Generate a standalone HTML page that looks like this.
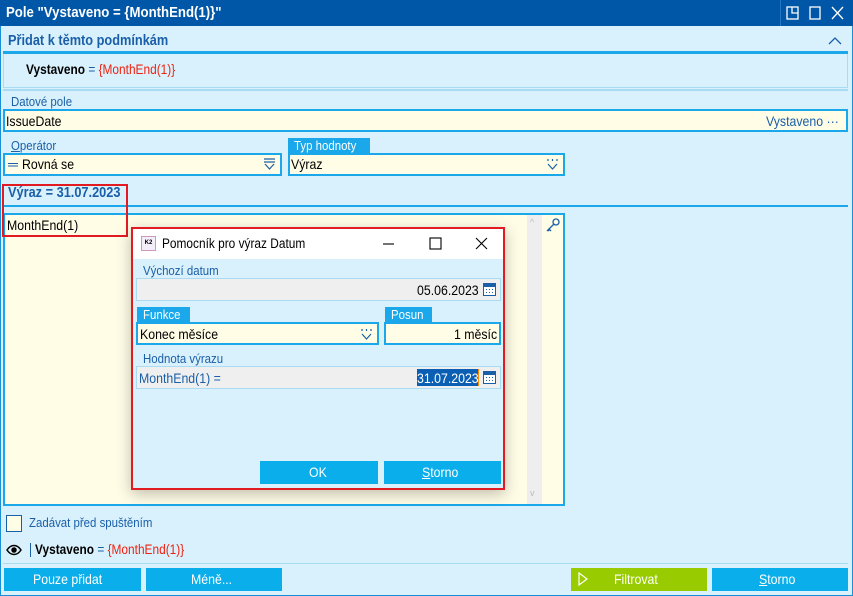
<!DOCTYPE html>
<html><head><meta charset="utf-8"><style>
*{margin:0;padding:0;box-sizing:border-box}
body{width:853px;height:596px;background:#fff;font-family:"Liberation Sans",sans-serif;font-size:12px;position:relative;overflow:hidden;color:#000}
.a{position:absolute}
.n{display:inline-block;transform:scaleX(.88);transform-origin:left center;white-space:nowrap}
.inp{position:absolute;background:#fffde6;border:2px solid #1aa8ea}
.lbl{position:absolute;color:#1a5fa8;font-size:13px}
.tab{position:absolute;background:#1aa8ea;color:#fff;font-size:13px;padding-left:6px;line-height:15px}
.btn{position:absolute;background:#0aaeea;color:#fff;text-align:center;line-height:23px;font-size:14px}
</style></head><body>
<div class="a" style="left:0;top:0;width:853px;height:596px;background:#d9f1fc;border:1px solid #1a8fd8"></div>
<div class="a" style="left:0;top:0;width:853px;height:26px;background:#0057a8"></div>
<div class="a" style="left:6px;top:4px;color:#fff;font-weight:bold;font-size:15px"><span class="n">Pole "Vystaveno = {MonthEnd(1)}"</span></div>
<div class="a" style="left:780px;top:0;width:1px;height:26px;background:#2a75c0"></div>
<svg class="a" style="left:786px;top:6px" width="62" height="15" fill="none" stroke="#fff" stroke-width="1.3"><rect x="1" y="1" width="11" height="12"/><path d="M6 1v6h6"/><rect x="24" y="1" width="10" height="12"/><path d="M46 1l11 12M57 1L46 13"/></svg>
<div class="a" style="left:8px;top:33px;color:#1a5fa8;font-weight:bold;font-size:14.5px"><span class="n">Přidat k těmto podmínkám</span></div>
<svg class="a" style="left:828px;top:36px" width="14" height="9" fill="none" stroke="#1a5fa8" stroke-width="1.3"><path d="M1 8l6-6 6 6"/></svg>
<div class="a" style="left:3px;top:51px;width:845px;height:3px;background:#1aa8ea"></div>
<div class="a" style="left:3px;top:54px;width:845px;height:34px;border:1px solid #a9dcf2;border-top:none"></div>
<div class="a" style="left:26px;top:62px;font-size:13.5px"><span class="n"><b>Vystaveno</b> <span style="color:#1a5fa8">=</span> <span style="color:#e21">{MonthEnd(1)}</span></span></div>
<div class="a" style="left:3px;top:89px;width:845px;height:2px;background:#a9dcf2"></div>
<div class="lbl" style="left:11px;top:94px"><span class="n">Datové pole</span></div>
<div class="inp" style="left:3px;top:109px;width:845px;height:23px"></div>
<div class="a" style="left:6px;top:113px;font-size:14px"><span class="n">IssueDate</span></div>
<div class="a" style="left:766px;top:113px;font-size:14px;color:#1a5fa8"><span class="n">Vystaveno ···</span></div>
<div class="lbl" style="left:11px;top:138px"><span class="n"><u>O</u>perátor</span></div>
<div class="inp" style="left:3px;top:153px;width:279px;height:23px"></div>
<div class="a" style="left:8px;top:156px;font-size:14px"><span style="color:#1a5fa8">═</span> <span class="n">Rovná se</span></div>
<svg class="a" style="left:263px;top:158px" width="13" height="12" fill="none" stroke="#1a5fa8" stroke-width="1.2"><path d="M1 1h11M1 4h11M2 6l4.5 5 4.5-5"/></svg>
<div class="tab" style="left:288px;top:138px;width:82px;height:16px"><span class="n">Typ hodnoty</span></div>
<div class="inp" style="left:288px;top:153px;width:277px;height:23px"></div>
<div class="a" style="left:291px;top:156px;font-size:14px"><span class="n">Výraz</span></div>
<svg class="a" style="left:546px;top:158px" width="13" height="12" fill="none" stroke="#1a5fa8" stroke-width="1.2"><path d="M2 1v2M6.5 1v2M11 1v2M2 6l4.5 5 4.5-5"/></svg>
<div class="a" style="left:8px;top:185px;color:#1a5fa8;font-weight:bold;font-size:14.5px"><span class="n">Výraz = 31.07.2023</span></div>
<div class="a" style="left:3px;top:205px;width:845px;height:2px;background:#1aa8ea"></div>
<div class="inp" style="left:3px;top:213px;width:562px;height:293px"></div>
<div class="a" style="left:527px;top:215px;width:15px;height:289px;background:#eeeeee"></div>
<div class="a" style="left:530px;top:217px;color:#bbb;font-size:9px">^</div>
<div class="a" style="left:530px;top:488px;color:#bbb;font-size:9px">v</div>
<svg class="a" style="left:545px;top:217px" width="16" height="16" fill="none" stroke="#1a5fa8" stroke-width="1.3"><circle cx="11" cy="5" r="3"/><path d="M9 7L2 14M4 12l2 2M3 13l1 1"/></svg>
<div class="a" style="left:7px;top:217px;font-size:14px"><span class="n">MonthEnd(1)</span></div>
<div class="a" style="left:2px;top:184px;width:126px;height:53px;border:2px solid #e21b23"></div>
<!-- dialog -->
<div class="a" style="left:131px;top:227px;width:374px;height:263px;border:2px solid #e21b23;background:#d9f1fc;box-shadow:0 4px 14px rgba(0,0,0,.25)"></div>
<div class="a" style="left:133px;top:229px;width:370px;height:30px;background:#fff"></div>
<div class="a" style="left:141px;top:236px;width:15px;height:15px;border:1px solid #c9b; background:#f4eefa;font-size:6px;font-weight:bold;line-height:13px;text-align:center">K2</div>
<div class="a" style="left:162px;top:236px;font-size:13.5px"><span class="n">Pomocník pro výraz Datum</span></div>
<svg class="a" style="left:383px;top:237px" width="106" height="14" fill="none" stroke="#000" stroke-width="1.1"><path d="M0 7h11"/><rect x="47" y="1" width="11" height="11"/><path d="M93 1l11 11M104 1L93 12"/></svg>
<div class="lbl" style="left:143px;top:263px"><span class="n">Výchozí datum</span></div>
<div class="a" style="left:136px;top:278px;width:365px;height:23px;background:#efefef;border:1px solid #a9dcf2"></div>
<div class="a" style="left:417px;top:282px;font-size:14px"><span class="n">05.06.2023</span></div>
<svg class="a" style="left:483px;top:283px" width="13" height="13"><rect x=".5" y=".5" width="12" height="12" fill="#fff" stroke="#1a5fa8"/><rect x="1" y="1" width="11" height="3" fill="#1a5fa8"/><path d="M3 6h1v1H3zM6 6h1v1H6zM9 6h1v1H9zM3 9h1v1H3zM6 9h1v1H6zM9 9h1v1H9z" fill="#1a5fa8"/></svg>
<div class="tab" style="left:137px;top:307px;width:53px;height:15px"><span class="n">Funkce</span></div>
<div class="inp" style="left:136px;top:322px;width:243px;height:23px"></div>
<div class="a" style="left:140px;top:326px;font-size:14px"><span class="n">Konec měsíce</span></div>
<svg class="a" style="left:360px;top:328px" width="13" height="12" fill="none" stroke="#1a5fa8" stroke-width="1.2"><path d="M2 1v2M6.5 1v2M11 1v2M2 6l4.5 5 4.5-5"/></svg>
<div class="tab" style="left:385px;top:307px;width:47px;height:15px"><span class="n">Posun</span></div>
<div class="inp" style="left:384px;top:322px;width:117px;height:23px"></div>
<div class="a" style="left:454px;top:326px;font-size:14px"><span class="n">1 měsíc</span></div>
<div class="lbl" style="left:143px;top:351px"><span class="n">Hodnota výrazu</span></div>
<div class="a" style="left:136px;top:366px;width:365px;height:23px;background:#efefef;border:1px solid #a9dcf2"></div>
<div class="a" style="left:139px;top:370px;font-size:14px;color:#1a5fa8"><span class="n">MonthEnd(1) =</span></div>
<div class="a" style="left:417px;top:369px;width:62px;height:17px;background:#0a5fb4;border-right:1px solid #f80"></div>
<div class="a" style="left:417px;top:370px;font-size:14px;color:#fff"><span class="n">31.07.2023</span></div>
<svg class="a" style="left:483px;top:371px" width="13" height="13"><rect x=".5" y=".5" width="12" height="12" fill="#fff" stroke="#1a5fa8"/><rect x="1" y="1" width="11" height="3" fill="#1a5fa8"/><path d="M3 6h1v1H3zM6 6h1v1H6zM9 6h1v1H9zM3 9h1v1H3zM6 9h1v1H6zM9 9h1v1H9z" fill="#1a5fa8"/></svg>
<div class="btn" style="left:260px;top:461px;width:118px;height:23px"><span class="n">OK</span></div>
<div class="btn" style="left:384px;top:461px;width:117px;height:23px"><span class="n"><u>S</u>torno</span></div>
<!-- bottom -->
<div class="a" style="left:6px;top:515px;width:16px;height:17px;border:1px solid #1a5fa8;background:#fffde6"></div>
<div class="lbl" style="left:29px;top:515px"><span class="n">Zadávat před spuštěním</span></div>
<svg class="a" style="left:6px;top:544px" width="16" height="12" fill="none" stroke="#000" stroke-width="1.5"><path d="M1 6c4-6 10-6 14 0-4 6-10 6-14 0z"/><circle cx="8" cy="6" r="2" fill="#000"/></svg>
<div class="a" style="left:30px;top:543px;width:1px;height:14px;background:#1a5fa8"></div>
<div class="a" style="left:35px;top:542px;font-size:13.5px"><span class="n"><b>Vystaveno</b> <span style="color:#1a5fa8">=</span> <span style="color:#e21">{MonthEnd(1)}</span></span></div>
<div class="a" style="left:3px;top:563px;width:845px;height:1px;background:#a9dcf2"></div>
<div class="btn" style="left:4px;top:568px;width:137px;height:23px"><span class="n">Pouze přidat</span></div>
<div class="btn" style="left:146px;top:568px;width:136px;height:23px"><span class="n">Méně...</span></div>
<div class="btn" style="left:571px;top:568px;width:136px;height:23px;background:#99cc00"><span class="n">Filtrovat</span></div>
<svg class="a" style="left:578px;top:572px" width="10" height="14" fill="none" stroke="#fff" stroke-width="1.2"><path d="M1 1l8 6-8 6z"/></svg>
<div class="btn" style="left:712px;top:568px;width:136px;height:23px"><span class="n"><u>S</u>torno</span></div>
</body></html>
